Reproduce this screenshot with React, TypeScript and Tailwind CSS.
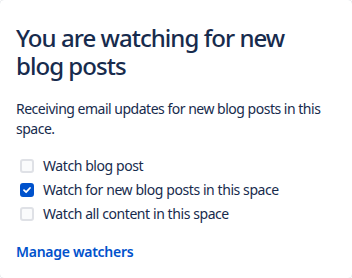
import React, { useState } from 'react';

const options = [
  'Watch blog post',
  'Watch for new blog posts in this space',
  'Watch all content in this space',
];

export default function App() {
  const [checked, setChecked] = useState<boolean[]>([false, true, false]);

  const toggle = (i: number) => {
    setChecked(prev => prev.map((v, idx) => (idx === i ? !v : v)));
  };

  return (
    <div className="w-[352px] h-[278px] bg-white" style={{ fontFamily: '"Noto Sans", "Open Sans", sans-serif' }}>
      <div className="h-full rounded-sm bg-white shadow-[0_0_1px_rgba(9,30,66,0.31)] px-4 pt-6">
        <h2 className="text-[24px] leading-[28px] font-medium text-[#172B4D] tracking-[-0.04em]">
          You are watching for new blog posts
        </h2>
        <p className="mt-[19px] text-[14px] leading-[20px] text-[#172B4D] tracking-[-0.035em]">
          Receiving email updates for new blog posts in this space.
        </p>

        {/* Options */}
        <div className="mt-[15px] flex flex-col">
          {options.map((label, i) => (
            <label key={label} className="flex items-center h-6 pl-1 cursor-pointer" onClick={() => toggle(i)}>
              <span
                className={`w-[14px] h-[14px] rounded-[3px] flex items-center justify-center border-2 ${
                  checked[i] ? 'bg-[#0052CC] border-[#0052CC]' : 'bg-[#FAFBFC] border-[#DFE1E6]'
                }`}
              >
                {checked[i] && (
                  <svg width="10" height="10" viewBox="0 0 10 10" fill="none">
                    <path d="M2 5.2 L4.1 7.2 L8 3" stroke="white" strokeWidth="1.8" strokeLinecap="round" strokeLinejoin="round" />
                  </svg>
                )}
              </span>
              <span className="ml-[9px] text-[14px] leading-[20px] text-[#172B4D] tracking-[-0.03em]">{label}</span>
            </label>
          ))}
        </div>

        <a href="#" className="block mt-4 text-[14px] leading-[20px] font-semibold text-[#0052CC] tracking-[-0.02em]">
          Manage watchers
        </a>
      </div>
    </div>
  );
}
